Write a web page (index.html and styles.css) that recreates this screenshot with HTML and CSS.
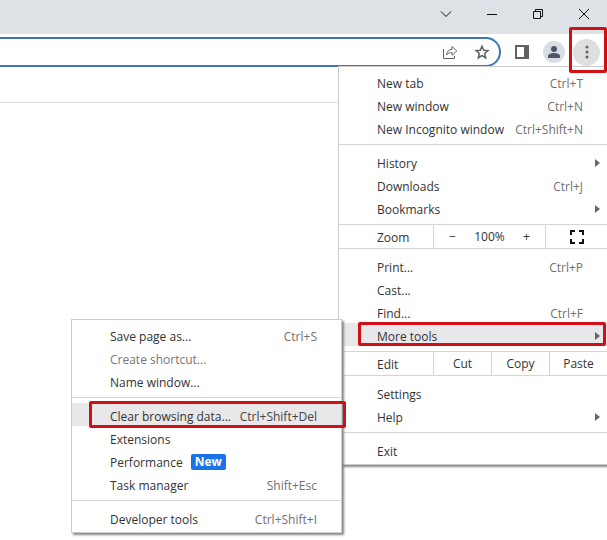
FILE: index.html
```html
<!DOCTYPE html>
<html lang="en">
<head>
  <meta charset="UTF-8" />
  <meta name="viewport" content="width=device-width, initial-scale=1.0" />
  <title>Clear browsing data</title>
  <link rel="stylesheet" href="styles.css">
</head>
<body>
  <header class="titlebar">
    <button class="win-button" aria-label="Search tabs">
      <svg width="12" height="12" viewBox="0 0 12 12"><path d="M1 3.5l5 5 5-5" /></svg>
    </button>
    <button class="win-button" aria-label="Minimize">
      <svg width="12" height="12" viewBox="0 0 12 12"><path d="M1 6.5h10" /></svg>
    </button>
    <button class="win-button" aria-label="Restore">
      <svg width="12" height="12" viewBox="0 0 12 12"><path d="M1.5 3.5h7v7h-7zM3.5 3.5v-2h7v7h-2" /></svg>
    </button>
    <button class="win-button" aria-label="Close">
      <svg width="12" height="12" viewBox="0 0 12 12"><path d="M1 1l10 10M11 1L1 11" /></svg>
    </button>
  </header>

  <div class="toolbar">
    <div class="address">
      <input type="text" class="address-input" aria-label="Address" />
      <button class="icon-button" aria-label="Share">
        <svg width="16" height="16" viewBox="0 0 16 16"><path d="M1.5 5v9.500h11V12M4.500 11c.4-3.600 2.300-5.500 5.500-5.700V2.500l4.800 4.500L10 11.200V8.500c-2.400 0-4.200.7-5.500 2.500z" /></svg>
      </button>
      <button class="icon-button" aria-label="Bookmark this tab">
        <svg width="16" height="16" viewBox="0 0 16 16"><path class="star" d="M8 2.200l1.700 4 4.300.4-3.300 2.900 1 4.300L8 11.500l-3.700 2.300 1-4.300L2 6.600l4.300-.4z" /></svg>
      </button>
    </div>
    <div class="tools">
      <button class="icon-button panel-button" aria-label="Side panel">
        <svg width="14" height="14" viewBox="0 0 14 14"><path class="solid" d="M0 0h14v14H0zM2 2v10h7V2z" /></svg>
      </button>
      <button class="avatar" aria-label="Profile">
        <svg width="12" height="12" viewBox="0 0 12 12"><circle class="person" cx="6" cy="3" r="3" /><path class="person" d="M0 12v-2c0-2 3.500-3 6-3s6 1 6 3v2z" /></svg>
      </button>
      <div class="more-wrap">
        <button class="more" aria-label="Customize and control">
          <svg width="4" height="14" viewBox="0 0 4 14"><circle cx="2" cy="2" r="1.500" /><circle cx="2" cy="7" r="1.500" /><circle cx="2" cy="12" r="1.500" /></svg>
        </button>
        <span class="mark mark-more"></span>
      </div>
    </div>
  </div>
  <div class="bookmarks-bar"></div>

  <nav class="menu main-menu" aria-label="Main menu">
    <ul class="group">
      <li><button class="item">New tab<span class="key">Ctrl+T</span></button></li>
      <li><button class="item">New window<span class="key">Ctrl+N</span></button></li>
      <li><button class="item">New Incognito window<span class="key">Ctrl+Shift+N</span></button></li>
    </ul>
    <ul class="group">
      <li><button class="item has-sub">History</button></li>
      <li><button class="item">Downloads<span class="key">Ctrl+J</span></button></li>
      <li><button class="item has-sub">Bookmarks</button></li>
    </ul>
    <div class="split zoom-row">
      <span class="split-label">Zoom</span>
      <div class="zoom">
        <button class="cell">−</button>
        <span class="zoom-value">100%</span>
        <button class="cell">+</button>
      </div>
      <button class="cell" aria-label="Full screen">
        <svg width="14" height="14" viewBox="0 0 14 14"><path class="corners" d="M1 5V1h4M9 1h4v4M13 9v4H9M5 13H1V9" /></svg>
      </button>
    </div>
    <ul class="group">
      <li><button class="item">Print...<span class="key">Ctrl+P</span></button></li>
      <li><button class="item">Cast...</button></li>
      <li><button class="item">Find...<span class="key">Ctrl+F</span></button></li>
      <li class="anchor">
        <button class="item has-sub active">More tools</button>
        <span class="mark mark-tools"></span>
        <div class="menu sub-menu">
          <ul class="group">
            <li><button class="item">Save page as...<span class="key">Ctrl+S</span></button></li>
            <li><button class="item" disabled>Create shortcut...</button></li>
            <li><button class="item">Name window...</button></li>
          </ul>
          <ul class="group">
            <li class="anchor">
              <button class="item active">Clear browsing data...<span class="key">Ctrl+Shift+Del</span></button>
              <span class="mark mark-clear"></span>
            </li>
            <li><button class="item">Extensions</button></li>
            <li><button class="item">Performance<span class="badge">New</span></button></li>
            <li><button class="item">Task manager<span class="key">Shift+Esc</span></button></li>
          </ul>
          <ul class="group">
            <li><button class="item">Developer tools<span class="key">Ctrl+Shift+I</span></button></li>
          </ul>
        </div>
      </li>
    </ul>
    <div class="split edit-row">
      <span class="split-label">Edit</span>
      <button class="cell">Cut</button>
      <button class="cell">Copy</button>
      <button class="cell">Paste</button>
    </div>
    <ul class="group">
      <li><button class="item">Settings</button></li>
      <li><button class="item has-sub">Help</button></li>
    </ul>
    <ul class="group">
      <li><button class="item">Exit</button></li>
    </ul>
  </nav>
</body>
</html>
```
FILE: styles.css
```css
* {
  box-sizing: border-box;
}
body {
  margin: 0;
  background: #fff;
  color: #333;
  font-family: "Open Sans", "Noto Sans", sans-serif;
  font-size: 12px;
  line-height: 17px;
}
button {
  margin: 0;
  padding: 0;
  border: none;
  background: none;
  color: inherit;
  font: inherit;
}
svg {
  display: block;
  fill: none;
  stroke: #5f6368;
}

/* window frame */
.titlebar {
  display: flex;
  justify-content: flex-end;
  height: 34px;
  padding-bottom: 6px;
  background: #dee1e6;
}
.win-button {
  display: flex;
  align-items: center;
  justify-content: center;
  width: 46px;
}
.win-button svg {
  stroke: #111;
}
.toolbar {
  display: flex;
  height: 33px;
  padding-top: 3px;
  border-bottom: 1px solid #dcdcdc;
}
.address {
  flex: 1;
  display: flex;
  align-items: center;
  gap: 16px;
  height: 30px;
  padding-right: 9px;
  border: 2px solid #3f76bb;
  border-left: none;
  border-radius: 0 15px 15px 0;
}
.address-input {
  flex: 1;
  min-width: 0;
  border: none;
  outline: none;
  background: none;
  font: inherit;
}
.tools {
  display: flex;
  align-items: center;
  gap: 8px;
  height: 30px;
  padding: 0 7px 0 14px;
}
.panel-button {
  margin-right: 6px;
}
.solid {
  fill: #5f6368;
  fill-rule: evenodd;
  stroke: none;
}
.star {
  stroke-width: 1.5;
}
.avatar,
.more {
  display: flex;
  align-items: center;
  justify-content: center;
  border-radius: 50%;
}
.avatar {
  width: 22px;
  height: 22px;
  background: #dadde3;
}
.person {
  fill: #4c5668;
  stroke: none;
}
.more-wrap {
  position: relative;
}
.more {
  width: 27px;
  height: 27px;
  background: #dfdfdf;
}
.more svg {
  fill: #5f6368;
  stroke: none;
}
.bookmarks-bar {
  height: 36px;
  border-bottom: 1px solid #dcdcdc;
}

/* menus */
.menu {
  position: absolute;
  background: #fff;
  border: 1px solid #ccc;
  box-shadow: 2px 2px 2px #888;
}
.main-menu {
  top: 66px;
  right: 0;
  width: 269px;
  border-right: none;
}
.sub-menu {
  top: -4px;
  right: calc(100% - 3px);
  width: 271px;
}
.group {
  margin: 0;
  padding: 5px 0;
  list-style: none;
}
.group:first-child {
  padding-top: 3px;
}
.group:last-child {
  padding-bottom: 3px;
}
.group + .group,
.split {
  border-top: 1px solid #d4d4d4;
}
.item {
  display: flex;
  align-items: center;
  width: 100%;
  height: 23px;
  padding: 3px 24px 0 38px;
  text-align: left;
}
.item:disabled {
  color: #777;
}
.key {
  margin-left: auto;
  color: #707070;
}
.active {
  background: #e8e8ea;
}
.active .key {
  color: #444;
}
.has-sub {
  padding-right: 7px;
}
.has-sub::after {
  content: "";
  margin-left: auto;
  border: 4px solid transparent;
  border-left: 5px solid #666;
  border-right: none;
}
.badge {
  margin-left: 8px;
  padding: 0 4px;
  border-radius: 2px;
  background: #1a73e8;
  color: #fff;
  font-weight: 700;
  line-height: 16px;
}
.split {
  display: grid;
  height: 25px;
  border-bottom: 1px solid #d4d4d4;
}
.zoom-row {
  grid-template-columns: 94px 1fr 62px;
}
.edit-row {
  grid-template-columns: 94px 1fr 1fr 1fr;
}
.split-label {
  padding: 4px 0 0 38px;
}
.split > .cell,
.zoom {
  display: flex;
  align-items: center;
  justify-content: center;
  border-left: 1px solid #d4d4d4;
}
.zoom .cell {
  width: 36px;
}
.zoom-value {
  width: 38px;
  text-align: center;
}
.corners {
  stroke: #111;
  stroke-width: 2;
}

/* red highlight frames */
.anchor {
  position: relative;
}
.mark {
  position: absolute;
  z-index: 1;
  border: 3px solid #d01015;
  border-radius: 2px;
  pointer-events: none;
}
.mark-more {
  top: -12px;
  right: -7px;
  bottom: -7px;
  left: -4px;
}
.mark-tools {
  top: -1px;
  right: 1px;
  bottom: 0;
  left: 19px;
}
.mark-clear {
  top: -2px;
  right: -5px;
  bottom: -2px;
  left: 17px;
}
```
